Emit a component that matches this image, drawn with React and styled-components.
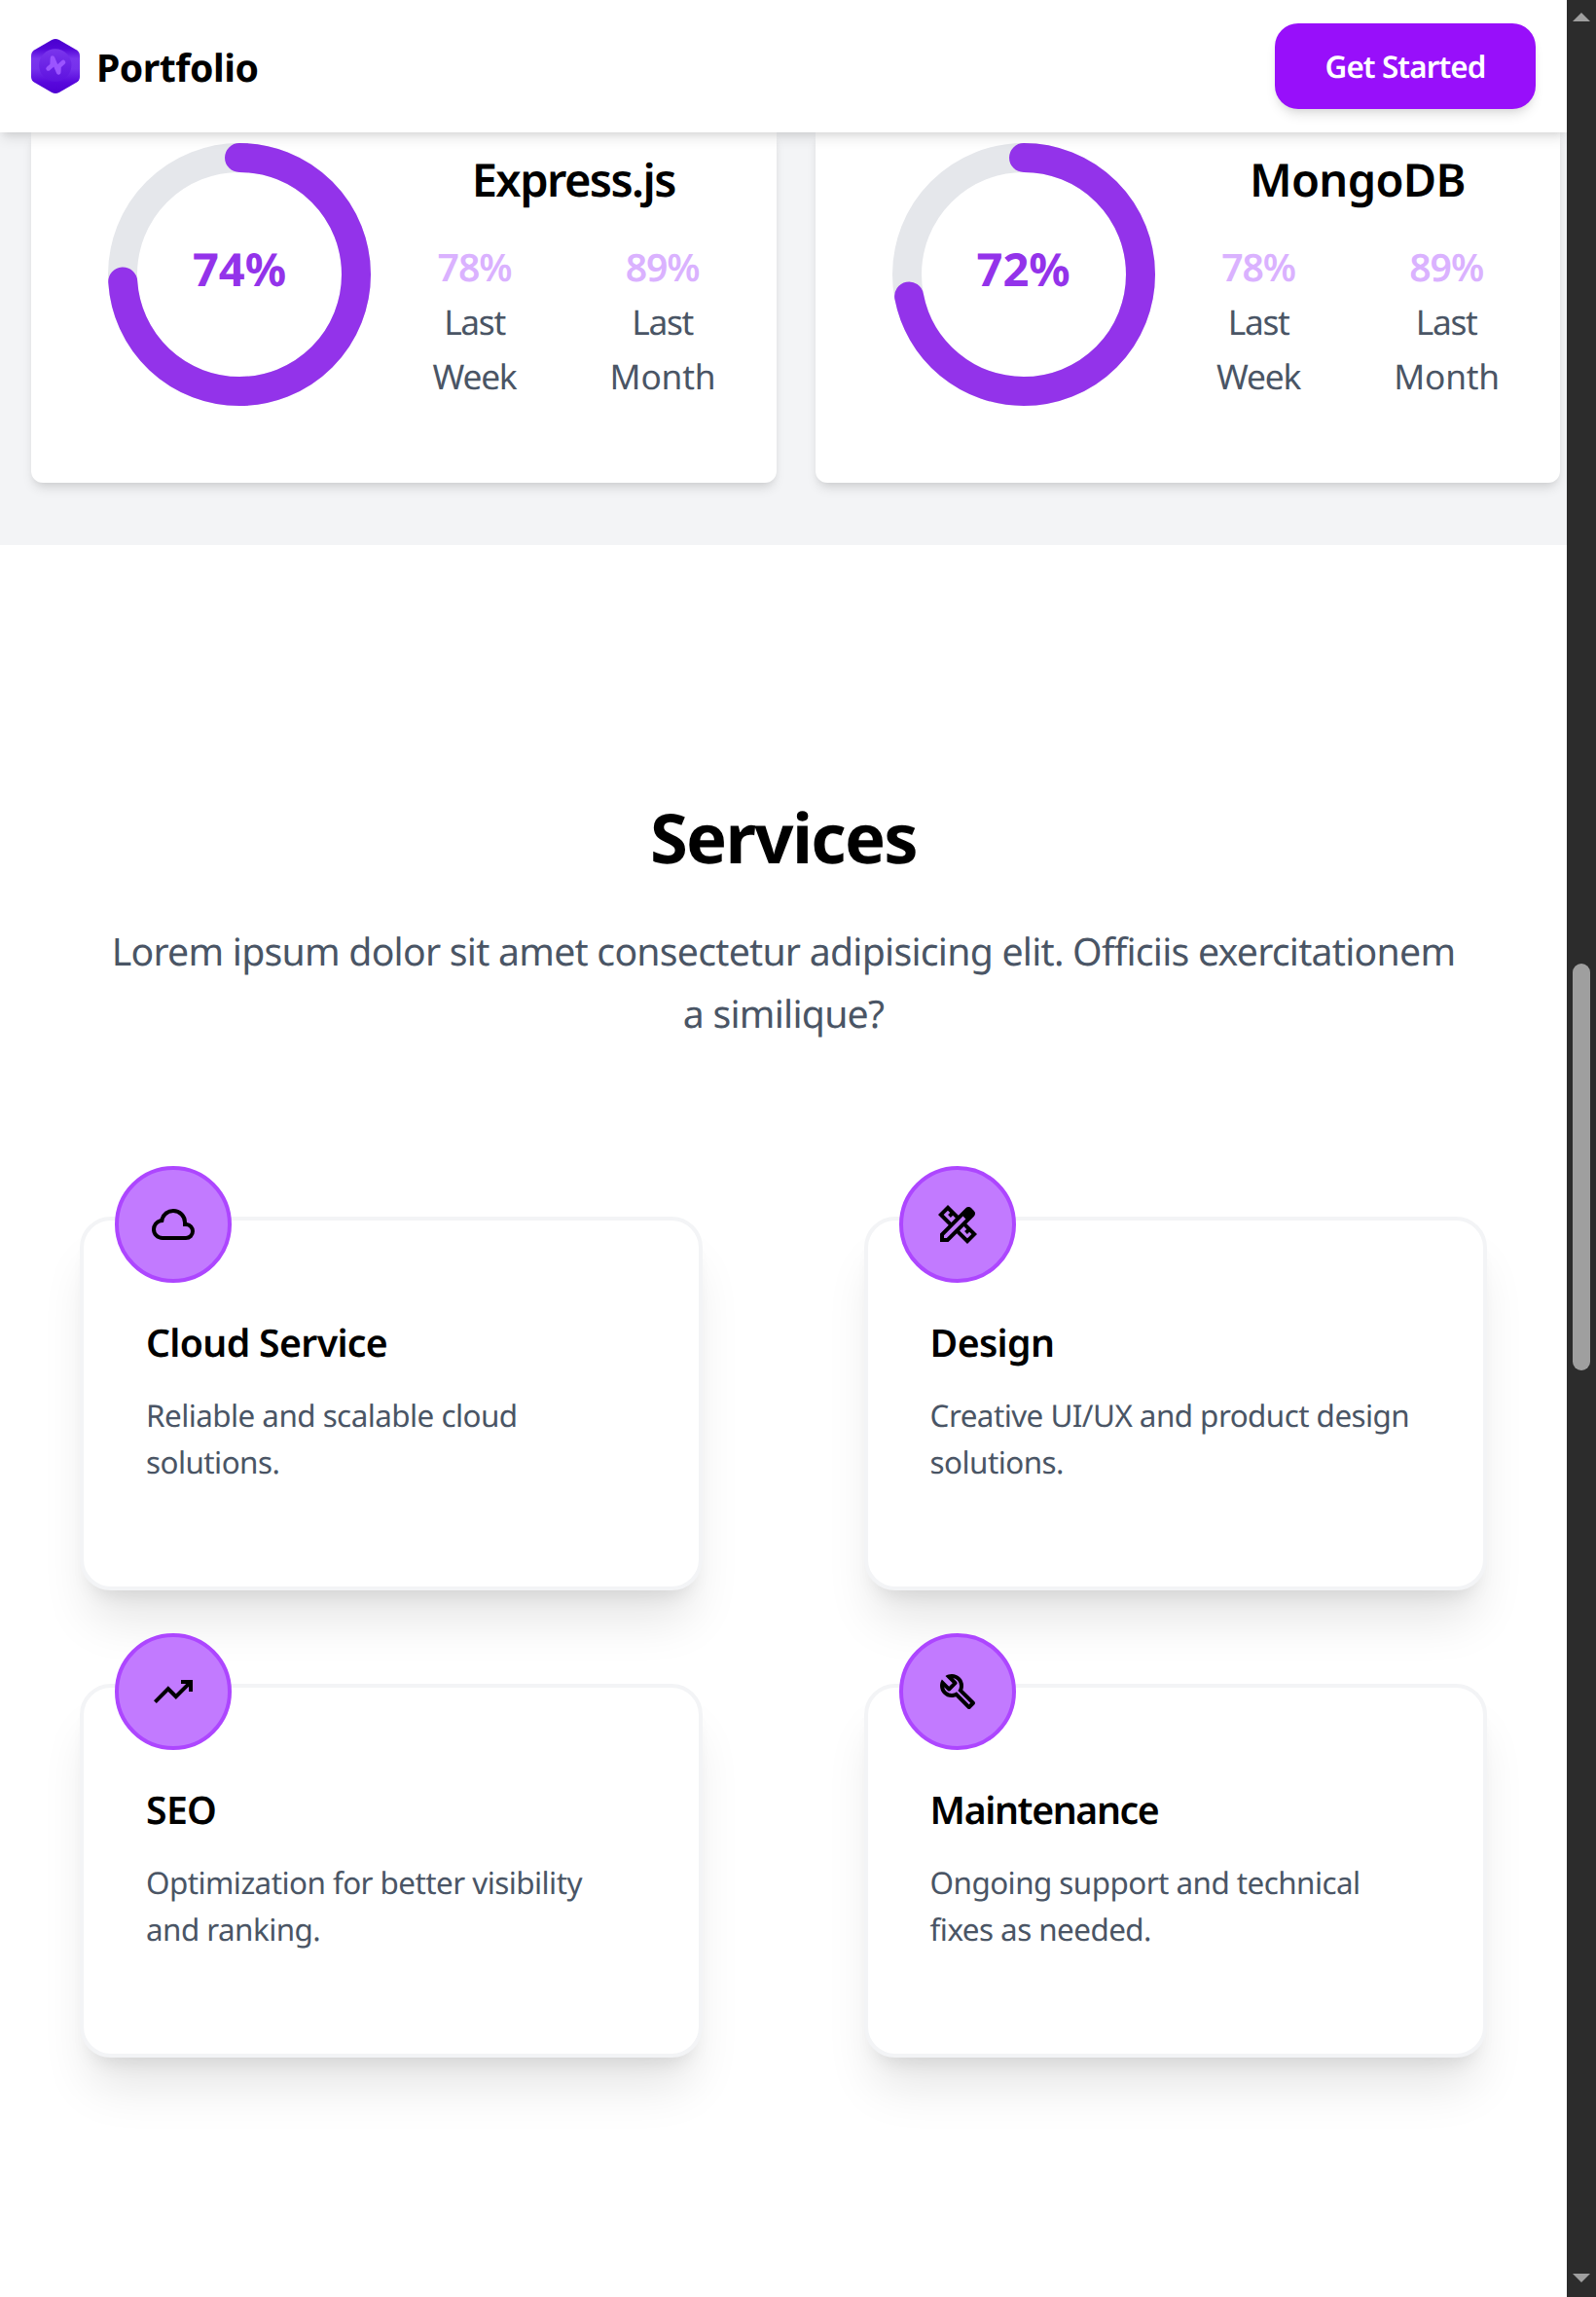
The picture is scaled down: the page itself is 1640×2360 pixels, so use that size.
import React from 'react';
import styled, { createGlobalStyle } from 'styled-components';

const GlobalStyle = createGlobalStyle`
  *, *::before, *::after { box-sizing: border-box; }
  body {
    margin: 0;
    background: #fff;
    color: #000;
    font-family: 'Noto Sans', 'Open Sans', sans-serif;
    text-rendering: geometricPrecision;
  }
  h1, h2, h3, p { margin: 0; }
`;

const Viewport = styled.div`
  display: flex;
  width: 1640px;
  height: 2360px;
  overflow: hidden;
`;

const Page = styled.div`
  width: 1610px;
  flex: none;
  overflow: hidden;
`;

/* Scrollbar */
const ScrollTrack = styled.div`
  display: flex;
  flex-direction: column;
  align-items: center;
  width: 30px;
  padding: 13px 0 15px;
  background: #2c2c2c;
`;

const ScrollArrow = styled.span`
  width: 18px;
  height: 9px;
  background: #9f9f9f;
  clip-path: ${(p) => (p.$down ? 'polygon(0 0, 100% 0, 50% 100%)' : 'polygon(50% 0, 100% 100%, 0 100%)')};
`;

const ScrollThumb = styled.span`
  width: 18px;
  height: 418px;
  margin: 968px 0 auto;
  border-radius: 9px;
  background: #9f9f9f;
`;

/* Header */
const Header = styled.header`
  position: relative;
  z-index: 2;
  display: flex;
  align-items: center;
  justify-content: space-between;
  height: 136px;
  padding: 0 32px;
  background: #fff;
  box-shadow: 0 8px 12px -2px rgba(0, 0, 0, 0.1), 0 4px 8px -4px rgba(0, 0, 0, 0.1);
`;

const Brand = styled.div`
  display: flex;
  align-items: center;
  gap: 17px;
`;

const BrandName = styled.span`
  padding-top: 4px;
  font-size: 39.2px;
  font-weight: 700;
  line-height: 56px;
  letter-spacing: -0.5px;
`;

const Logo = styled.svg`
  width: 50px;
  height: 56px;
`;

const CtaButton = styled.button`
  width: 268px;
  height: 88px;
  padding: 2px 0 0;
  border: 0;
  border-radius: 24px;
  background: #980ffa;
  color: #fff;
  font: 600 31.4px/48px 'Noto Sans', 'Open Sans', sans-serif;
  letter-spacing: -0.89px;
  text-rendering: geometricPrecision;
  box-shadow: 0 8px 12px -2px rgba(0, 0, 0, 0.1), 0 4px 8px -4px rgba(0, 0, 0, 0.1);
`;

/* Skills */
const Skills = styled.section`
  display: flex;
  gap: 40px;
  height: 424px;
  padding: 0 0 64px 32px;
  background: #f3f4f6;
`;

const SkillCard = styled.article`
  display: flex;
  flex: none;
  align-items: flex-start;
  gap: 63px;
  width: 765.6px;
  padding: 0 63px 0 79px;
  border-radius: 0 0 12px 12px;
  background: #fff;
  box-shadow: 0 8px 12px -2px rgba(0, 0, 0, 0.1), 0 4px 8px -4px rgba(0, 0, 0, 0.1);
`;

const Ring = styled.div`
  display: grid;
  place-items: center;
  width: 270px;
  height: 270px;
  margin-top: 11px;

  > * { grid-area: 1 / 1; }
`;

const RingSvg = styled.svg`
  width: 270px;
  height: 270px;
  transform: rotate(-90deg);
`;

const RingValue = styled.span`
  padding-bottom: 12px;
  color: #9333ea;
  font-size: 47px;
  font-weight: 700;
  line-height: 64px;
`;

const Stats = styled.div`
  flex: 1;
  padding-top: 16px;
  text-align: center;
`;

const SkillName = styled.h2`
  font-size: 47px;
  font-weight: 600;
  line-height: 64px;
  letter-spacing: ${(p) => p.$track}px;
`;

const StatRow = styled.div`
  display: flex;
  justify-content: space-between;
  margin-top: 31px;
`;

const Stat = styled.div`
  width: ${(p) => p.$width}px;
`;

const StatValue = styled.p`
  color: #dab2ff;
  font-size: 39.2px;
  font-weight: 600;
  line-height: 56px;
  letter-spacing: -1.1px;
`;

const StatLabel = styled.p`
  color: #4a5565;
  font-size: 35.3px;
  line-height: 56px;
  letter-spacing: ${(p) => p.$track}px;
`;

/* Services */
const Services = styled.section`
  display: flex;
  flex-direction: column;
  align-items: center;
  padding-top: 259.6px;
`;

const SectionTitle = styled.h1`
  font-size: 70.5px;
  font-weight: 700;
  line-height: 80px;
  letter-spacing: -1.69px;
`;

const SectionText = styled.p`
  width: 1400px;
  margin-top: 46px;
  color: #4a5565;
  font-size: 39.2px;
  line-height: 64px;
  letter-spacing: -0.75px;
  text-align: center;
`;

const ServiceGrid = styled.div`
  display: grid;
  grid-template-columns: 640px 640px;
  gap: 96px 165.6px;
  width: 1446px;
  margin-top: 176.4px;
`;

const ServiceCard = styled.article`
  position: relative;
  height: 384px;
  padding: 97.8px 60px 0 64px;
  border: 4px solid #f3f4f6;
  border-radius: 32px;
  background: #fff;
  box-shadow: 0 40px 50px -10px rgba(0, 0, 0, 0.1), 0 16px 20px -12px rgba(0, 0, 0, 0.1);
`;

const IconBadge = styled.span`
  position: absolute;
  top: -56px;
  left: 32px;
  display: flex;
  align-items: center;
  justify-content: center;
  width: 120px;
  height: 120px;
  border: 4px solid #ad46ff;
  border-radius: 50%;
  background: #c27aff;

  svg { width: 48px; height: 48px; }
`;

const ServiceName = styled.h3`
  font-size: 39.2px;
  font-weight: 600;
  line-height: 56px;
  letter-spacing: ${(p) => p.$track}px;
`;

const ServiceText = styled.p`
  margin-top: 23px;
  color: #4a5565;
  font-size: 31.4px;
  line-height: 48px;
  letter-spacing: -0.55px;
`;

const SKILLS = [
  { name: 'Express.js', value: 74, track: -1.55 },
  { name: 'MongoDB', value: 72, track: -0.65 },
];

const SERVICES = [
  {
    name: 'Cloud Service',
    track: -0.65,
    lines: ['Reliable and scalable cloud', 'solutions.'],
    icon: 'M260-160q-91 0-155.5-63T40-377q0-78 47-139t123-78q25-92 100-149t170-57q117 0 198.5 81.5T760-520q69 8 114.5 59.5T920-340q0 75-52.5 127.5T740-160H260Zm0-80h480q42 0 71-29t29-71q0-42-29-71t-71-29h-60v-80q0-83-58.5-141.5T480-720q-83 0-141.5 58.5T280-520h-20q-58 0-99 41t-41 99q0 58 41 99t99 41Z',
  },
  {
    name: 'Design',
    track: -0.65,
    lines: ['Creative UI/UX and product design', 'solutions.'],
    icon: 'm352-522 86-87-56-57-44 44-56-56 43-44-45-45-87 87 159 158Zm328 329 87-87-45-45-44 43-56-56 43-44-57-56-86 86 158 159ZM290-120H120v-170l175-175L80-680l200-200 216 216 151-152q12-12 27-18t31-6q16 0 31 6t27 18l53 54q12 12 18 27t6 31q0 16-6 30.5T816-647L665-495l215 215L680-80 465-295 290-120Zm-90-80h56l392-391-57-57-391 392v56Z',
  },
  {
    name: 'SEO',
    track: -0.65,
    lines: ['Optimization for better visibility', 'and ranking.'],
    icon: 'm136-240-56-56 296-298 160 160 208-206H640v-80h240v240h-80v-104L536-320 376-480 136-240Z',
  },
  {
    name: 'Maintenance',
    track: -1.36,
    lines: ['Ongoing support and technical', 'fixes as needed.'],
    icon: 'M686-132 444-376q-20 8-40.5 12t-43.5 4q-100 0-170-70t-70-170q0-36 10-68.5t28-61.5l146 146 72-72-146-146q29-18 61.5-28t68.5-10q100 0 170 70t70 170q0 23-4 43.5T584-516l244 242q12 12 12 29t-12 29l-84 84q-12 12-29 12t-29-12Zm29-85 27-27-256-256q18-20 26-46.5t8-53.5q0-60-38.5-104.5T386-758l74 74q12 12 12 28t-12 28L332-500q-12 12-28 12t-28-12l-74-74q9 57 53.5 95.5T360-440q26 0 52-8t47-25l256 256Z',
  },
];

function BrandLogo() {
  return (
    <Logo viewBox="0 0 50 56" aria-hidden="true">
      <defs>
        <linearGradient id="hex" x1="0" y1="0" x2="0" y2="1">
          <stop offset="0" stopColor="#4a00cf" />
          <stop offset="0.18" stopColor="#5406d8" />
          <stop offset="0.36" stopColor="#7a35ee" />
          <stop offset="0.55" stopColor="#7631ec" />
          <stop offset="0.8" stopColor="#5808dc" />
          <stop offset="1" stopColor="#4e00d2" />
        </linearGradient>
        <linearGradient id="disc" x1="0" y1="0" x2="0" y2="1">
          <stop offset="0" stopColor="#7a35ec" />
          <stop offset="1" stopColor="#5e12df" />
        </linearGradient>
      </defs>
      <path
        d="M21.2 1Q25-1 28.8 1L46.5 11.2Q50 13.4 50 17.3V38.7Q50 42.6 46.5 44.8L28.8 55Q25 57 21.2 55L3.5 44.8Q0 42.6 0 38.7V17.3Q0 13.4 3.5 11.2Z"
        fill="url(#hex)"
      />
      <circle cx="24.8" cy="27" r="16.7" fill="url(#disc)" />
      <path
        d="M17.6 30.4 21.6 27 22 19.6 28.2 34.4 28.6 28 33 24"
        fill="none"
        stroke="#9b54ff"
        strokeWidth="4.6"
        strokeLinejoin="round"
        strokeLinecap="round"
      />
    </Logo>
  );
}

function ProgressRing({ value }) {
  return (
    <Ring>
      <RingSvg viewBox="0 0 270 270">
        <circle cx="135" cy="135" r="120" fill="none" stroke="#e5e7eb" strokeWidth="30" />
        <circle
          cx="135"
          cy="135"
          r="120"
          fill="none"
          stroke="#9333ea"
          strokeWidth="30"
          strokeLinecap="round"
          pathLength="100"
          strokeDasharray={`${value} 100`}
        />
      </RingSvg>
      <RingValue>{value}%</RingValue>
    </Ring>
  );
}

export default function App() {
  return (
    <Viewport>
      <GlobalStyle />
      <Page>
        <Header>
          <Brand>
            <BrandLogo />
            <BrandName>Portfolio</BrandName>
          </Brand>
          <CtaButton type="button">Get Started</CtaButton>
        </Header>

        <Skills>
          {SKILLS.map((skill) => (
            <SkillCard key={skill.name}>
              <ProgressRing value={skill.value} />
              <Stats>
                <SkillName $track={skill.track}>{skill.name}</SkillName>
                <StatRow>
                  <Stat $width={87}>
                    <StatValue>78%</StatValue>
                    <StatLabel $track={-1.33}>Last</StatLabel>
                    <StatLabel $track={-1.2}>Week</StatLabel>
                  </Stat>
                  <Stat $width={108}>
                    <StatValue>89%</StatValue>
                    <StatLabel $track={-1.33}>Last</StatLabel>
                    <StatLabel $track={-0.2}>Month</StatLabel>
                  </Stat>
                </StatRow>
              </Stats>
            </SkillCard>
          ))}
        </Skills>

        <Services>
          <SectionTitle>Services</SectionTitle>
          <SectionText>
            Lorem ipsum dolor sit amet consectetur adipisicing elit. Officiis exercitationem a similique?
          </SectionText>
          <ServiceGrid>
            {SERVICES.map((service) => (
              <ServiceCard key={service.name}>
                <IconBadge>
                  <svg viewBox="0 -960 960 960" fill="#000">
                    <path d={service.icon} />
                  </svg>
                </IconBadge>
                <ServiceName $track={service.track}>{service.name}</ServiceName>
                <ServiceText>
                  {service.lines[0]}
                  <br />
                  {service.lines[1]}
                </ServiceText>
              </ServiceCard>
            ))}
          </ServiceGrid>
        </Services>
      </Page>

      <ScrollTrack>
        <ScrollArrow />
        <ScrollThumb />
        <ScrollArrow $down />
      </ScrollTrack>
    </Viewport>
  );
}
